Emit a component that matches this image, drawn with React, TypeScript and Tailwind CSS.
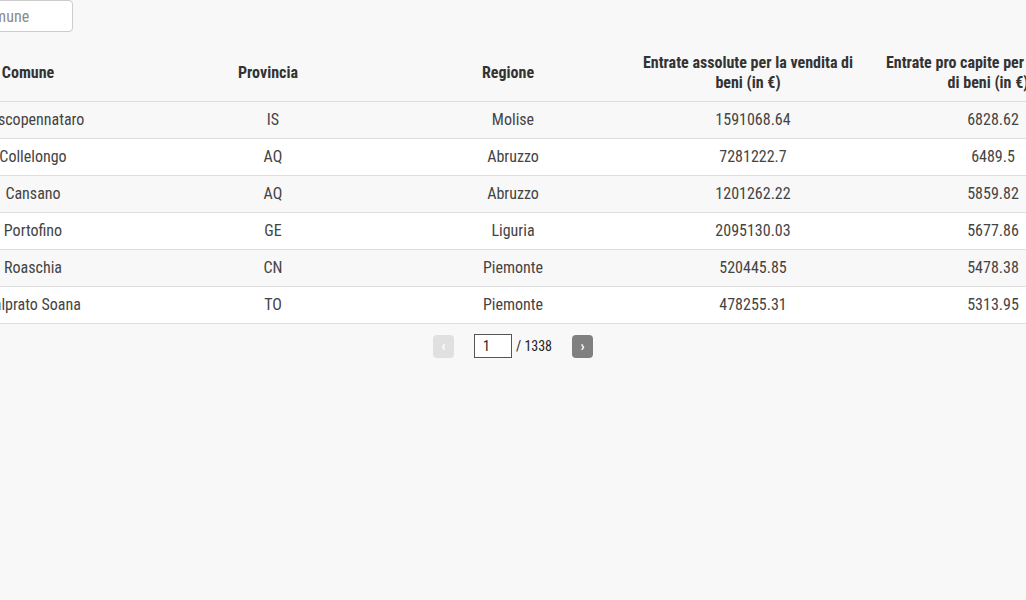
import React from 'react';

const rows = [
  { comune: 'Pescopennataro', prov: 'IS', regione: 'Molise', assolute: '1591068.64', capite: '6828.62' },
  { comune: 'Collelongo', prov: 'AQ', regione: 'Abruzzo', assolute: '7281222.7', capite: '6489.5' },
  { comune: 'Cansano', prov: 'AQ', regione: 'Abruzzo', assolute: '1201262.22', capite: '5859.82' },
  { comune: 'Portofino', prov: 'GE', regione: 'Liguria', assolute: '2095130.03', capite: '5677.86' },
  { comune: 'Roaschia', prov: 'CN', regione: 'Piemonte', assolute: '520445.85', capite: '5478.38' },
  { comune: 'Valprato Soana', prov: 'TO', regione: 'Piemonte', assolute: '478255.31', capite: '5313.95' },
];

const headers = [
  'Comune',
  'Provincia',
  'Regione',
  'Entrate assolute per la vendita di beni (in €)',
  'Entrate pro capite per la vendita di beni (in €)',
];

export default function App() {
  return (
    <div className="min-h-[600px] w-full overflow-hidden bg-[#f8f8f8] font-['Roboto',sans-serif] [font-stretch:condensed]">
      <div className="ml-[-87px] w-[1200px]">
        {/* Search */}
        <input
          placeholder="Comune"
          className="ml-[55px] block h-8 w-[105px] rounded border border-[#cccccc] bg-white px-2 text-[16px] text-[#333] placeholder-[#8a8a8a] outline-none"
        />

        {/* Table */}
        <table className="mt-[13px] w-[1200px] table-fixed border-collapse">
          <thead>
            <tr className="border-b border-[#dddddd]">
              {headers.map((h) => (
                <th
                  key={h}
                  className="w-[240px] pl-[6px] pr-[16px] py-2 text-center align-middle text-[16px] font-bold leading-5 text-[#333333]"
                >
                  {h}
                </th>
              ))}
            </tr>
          </thead>
          <tbody>
            {rows.map((r, i) => (
              <tr
                key={r.comune}
                className={`border-b border-[#dddddd] ${i % 2 === 0 ? 'bg-[#f8f8f8]' : 'bg-white'}`}
              >
                {[r.comune, r.prov, r.regione, r.assolute, r.capite].map((v, j) => (
                  <td key={j} className="h-[37px] px-3 text-center align-middle text-[16px] leading-5 text-[#444444]">
                    {v}
                  </td>
                ))}
              </tr>
            ))}
          </tbody>
        </table>

        {/* Pagination */}
        <div className="mt-[10px] flex items-center justify-center">
          <button className="flex h-[23px] w-[21px] items-center justify-center rounded-sm bg-[#e0e0e0] text-[15px] font-bold text-white">
            ‹
          </button>
          <input
            defaultValue="1"
            className="ml-5 h-6 w-[38px] border border-[#555] bg-white px-2 text-[14px] text-[#222] outline-none"
          />
          <span className="ml-1 text-[14px] text-[#222]">/ 1338</span>
          <button className="ml-5 flex h-[23px] w-[21px] items-center justify-center rounded-sm bg-[#808080] text-[15px] font-bold text-white">
            ›
          </button>
        </div>
      </div>
    </div>
  );
}
